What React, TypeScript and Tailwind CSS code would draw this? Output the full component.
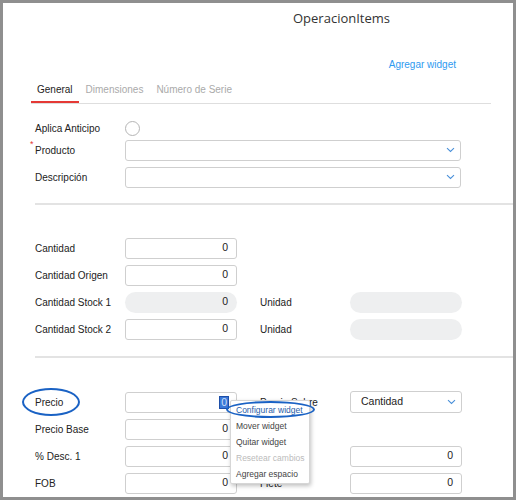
import React from "react";

const Chevron = () => (
    <svg width="9" height="6" viewBox="0 0 9 6" className="shrink-0">
        <path d="M1 1.2 L4.5 4.5 L8 1.2" fill="none" stroke="#4a90d9" strokeWidth="1.1" />
    </svg>
);

const NumInput: React.FC<{ value?: string; disabled?: boolean; selected?: boolean }> = ({ value = "0", disabled, selected }) => {
    if (disabled) {
        return (
            <div className="flex h-[21px] w-[112px] items-center justify-end rounded-full bg-[#eeeff0] pr-[9px] text-[10.5px] text-[#222]">
                {value}
            </div>
        );
    }
    return (
        <div className="flex h-[21px] w-[112px] items-center justify-end rounded-[3px] border border-[#cfcfcf] bg-white pr-[8px] text-[10.5px] text-[#222]">
            {selected ? <span className="bg-[#3b78d8] px-[1px] leading-[11px] text-[#cfe0f7] outline outline-1 outline-[#1e4fa8]">{value}</span> : value}
        </div>
    );
};

const Pill = () => <div className="h-[21px] w-[112px] rounded-full bg-[#eeeff0]" />;

const Select: React.FC<{ wide?: boolean; value?: string }> = ({ wide, value }) => (
    <div
        className={
            wide
                ? "flex h-[21px] w-[336px] items-center justify-between rounded-[3px] border border-[#cfcfcf] bg-white pl-[10px] pr-[5px] text-[10.5px] text-[#222]"
                : "flex h-[22px] w-[112px] items-center justify-between rounded-[3px] border border-[#cfcfcf] bg-white pl-[10px] pr-[5px] text-[10.5px] text-[#222]"
        }
    >
        <span>{value}</span>
        <Chevron />
    </div>
);

const Row: React.FC<{ label: string; children: React.ReactNode; required?: boolean; right?: React.ReactNode; rightLabel?: string }> = ({
    label,
    children,
    required,
    right,
    rightLabel,
}) => (
    <div className="flex h-[21px] items-center">
        <div className="relative w-[90px] whitespace-nowrap text-[10px] text-[#222]">
            {required && <span className="absolute -left-[5px] -top-[5px] text-[9px] text-[#e53935]">*</span>}
            {label}
        </div>
        {children}
        {right && (
            <>
                <div className="ml-[23px] w-[90px] whitespace-nowrap text-[10px] text-[#222]">{rightLabel}</div>
                {right}
            </>
        )}
    </div>
);

const Divider = () => <div className="h-[2px] bg-[#e3e3e3]" />;

export default function App() {
    return (
        <div className="relative h-[500px] w-[516px] overflow-hidden border-[3px] border-[#8f8f8f] bg-white font-['Liberation_Sans',Arial,sans-serif]">
            <div className="pt-[6px] pl-[290px] font-['Open_Sans',sans-serif] text-[13px] text-[#333]">OperacionItems</div>
            <div className="mt-[28px] pr-[57px] text-right text-[10px] text-[#2e9af0]">Agregar widget</div>

            <div className="ml-[28px] mr-[22px] mt-[10px] flex border-b border-[#dedede] text-[10px]">
                <div className="border-b-2 border-[#e53935] px-[6px] pb-[4px] text-[#222]">General</div>
                <div className="ml-[7px] pb-[4px] text-[#aaa]">Dimensiones</div>
                <div className="ml-[13px] pb-[4px] text-[#aaa]">Número de Serie</div>
            </div>

            <div className="pl-[32px]">
                <div className="mt-[17px] flex h-[16px] items-center">
                    <div className="w-[90px] text-[10px] text-[#222]">Aplica Anticipo</div>
                    <div className="h-[15px] w-[15px] rounded-full border border-[#b5b5b5] bg-white" />
                </div>
                <div className="mt-[3px] flex flex-col gap-[6px]">
                    <Row label="Producto" required>
                        <Select wide />
                    </Row>
                    <Row label="Descripción">
                        <Select wide />
                    </Row>
                </div>
                <div className="mt-[15px]">
                    <Divider />
                </div>

                <div className="mt-[33px] flex flex-col gap-[6px]">
                    <Row label="Cantidad">
                        <NumInput />
                    </Row>
                    <Row label="Cantidad Origen">
                        <NumInput />
                    </Row>
                    <Row label="Cantidad Stock 1" rightLabel="Unidad" right={<Pill />}>
                        <NumInput disabled />
                    </Row>
                    <Row label="Cantidad Stock 2" rightLabel="Unidad" right={<Pill />}>
                        <NumInput />
                    </Row>
                </div>
                <div className="mt-[16px]">
                    <Divider />
                </div>

                <div className="mt-[34px] flex flex-col gap-[6px]">
                    <Row label="Precio" rightLabel="Precio Sobre" right={<Select value="Cantidad" />}>
                        <NumInput selected />
                    </Row>
                    <Row label="Precio Base">
                        <NumInput />
                    </Row>
                    <Row label="% Desc. 1" rightLabel=" " right={<NumInput />}>
                        <NumInput />
                    </Row>
                    <Row label="FOB" rightLabel="Flete" right={<NumInput />}>
                        <NumInput />
                    </Row>
                </div>
            </div>

            {/* context menu */}
            <div className="absolute left-[227px] top-[397px] flex w-[80px] flex-col whitespace-nowrap rounded-[2px] border border-[#d6d6d6] bg-white pt-[1px] pb-[1px] pl-[5px] text-[8.5px] leading-[16px] shadow-[1px_2px_4px_rgba(0,0,0,0.25)]">
                <div className="text-[#2a5ea8]">Configurar widget</div>
                <div className="text-[#444]">Mover widget</div>
                <div className="text-[#444]">Quitar widget</div>
                <div className="text-[#bbb]">Resetear cambios</div>
                <div className="text-[#444]">Agregar espacio</div>
            </div>

            {/* annotation ellipses */}
            <div className="absolute left-[19px] top-[385px] h-[28px] w-[58px] rounded-[50%] border-[2.5px] border-[#1a62c4]" />
            <div className="absolute left-[223px] top-[398px] h-[17px] w-[89px] rounded-[50%] border-[2.5px] border-[#1a62c4]" />
        </div>
    );
}
